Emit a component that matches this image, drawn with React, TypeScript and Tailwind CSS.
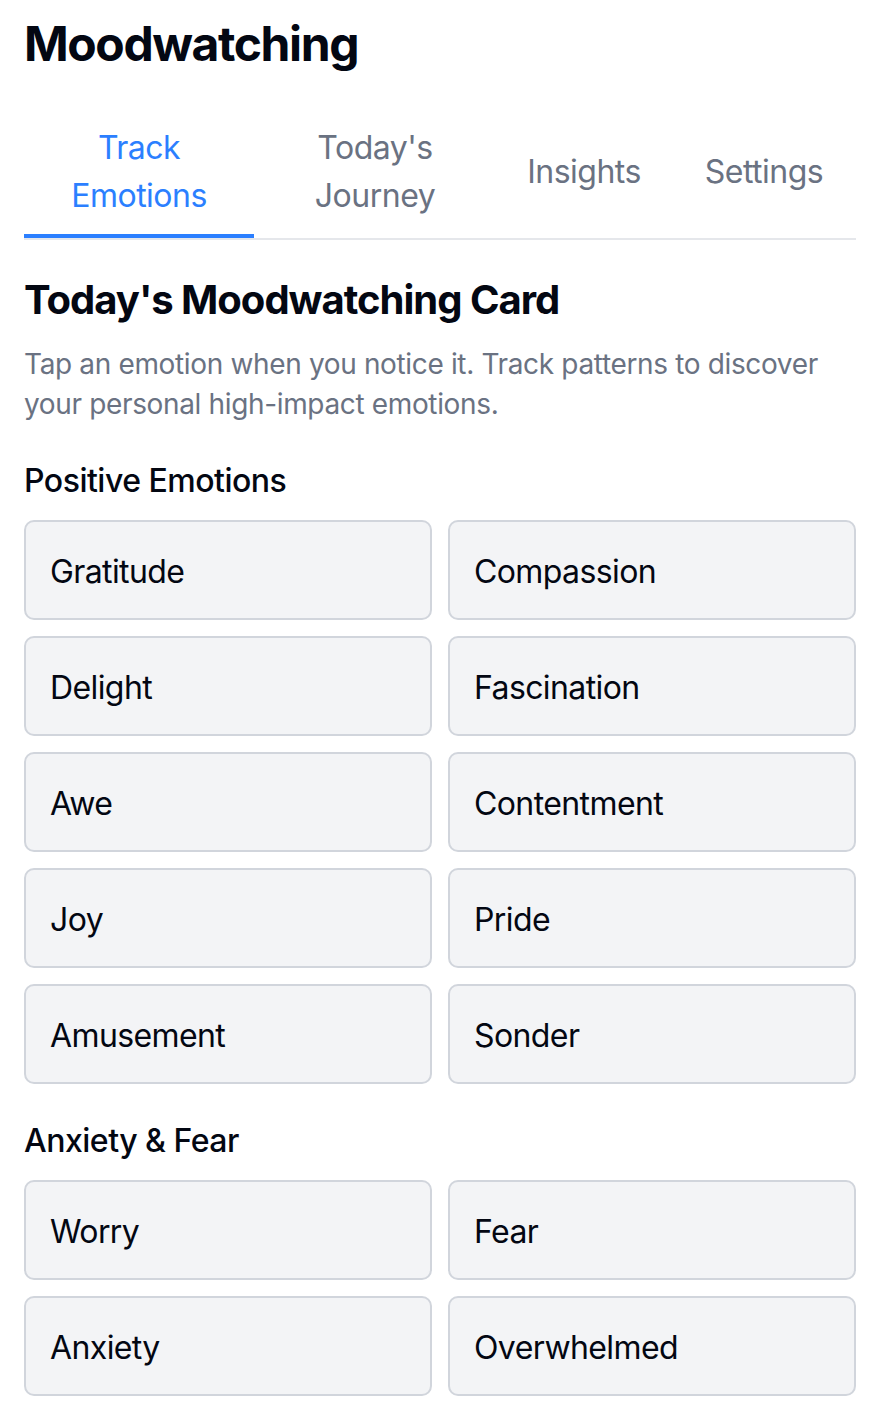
import { useState } from "react"

const tabs = [
    { label: "Track Emotions", width: "w-[230px]" },
    { label: "Today's Journey", width: "w-[242px]" },
    { label: "Insights", width: "w-[176px]" },
    { label: "Settings", width: "w-[184px]" },
]

const sections = [
    {
        title: "Positive Emotions",
        emotions: [
            "Gratitude",
            "Compassion",
            "Delight",
            "Fascination",
            "Awe",
            "Contentment",
            "Joy",
            "Pride",
            "Amusement",
            "Sonder",
        ],
    },
    {
        title: "Anxiety & Fear",
        emotions: ["Worry", "Fear", "Anxiety", "Overwhelmed"],
    },
]

export default function App() {
    const [active, setActive] = useState(0)

    return (
        <div className="min-h-screen bg-white pl-6 pr-[18px] pt-3 font-['Inter',sans-serif] text-gray-950">
            <h1 className="text-[48px] font-bold leading-[64px] tracking-[-1.4px]">
                Moodwatching
            </h1>

            {/* tabs */}
            <nav className="mt-[30px] flex border-b-2 border-gray-200">
                {tabs.map((tab, i) => (
                    <button
                        key={tab.label}
                        onClick={() => setActive(i)}
                        className={`${tab.width} flex items-center justify-center border-b-4 px-8 pb-[14px] pt-[18px] text-center text-[32px] leading-[48px] tracking-[-0.5px] ${
                            active === i
                                ? "border-blue-500 text-blue-500"
                                : "border-transparent text-gray-500"
                        }`}
                    >
                        {tab.label}
                    </button>
                ))}
            </nav>

            {/* card */}
            <section className="mt-8">
                <h2 className="text-[40px] font-bold leading-[56px] tracking-[-1px]">
                    Today's Moodwatching Card
                </h2>
                <p className="mt-4 text-[28px] leading-[40px] tracking-[-0.35px] text-gray-500">
                    Tap an emotion when you notice it. Track patterns to discover
                    your personal high-impact emotions.
                </p>

                {sections.map((section) => (
                    <div key={section.title} className="mt-[33px]">
                        <h3 className="text-[32px] font-medium leading-[48px] tracking-[-0.5px]">
                            {section.title}
                        </h3>
                        <div className="mt-[15px] grid grid-cols-2 gap-4">
                            {section.emotions.map((emotion) => (
                                <button
                                    key={emotion}
                                    className="flex h-[100px] items-center rounded-[10px] border-2 border-gray-300 bg-gray-100 px-6 pt-1 text-left text-[32px] leading-[48px] tracking-[-0.6px]"
                                >
                                    {emotion}
                                </button>
                            ))}
                        </div>
                    </div>
                ))}
            </section>
        </div>
    )
}
